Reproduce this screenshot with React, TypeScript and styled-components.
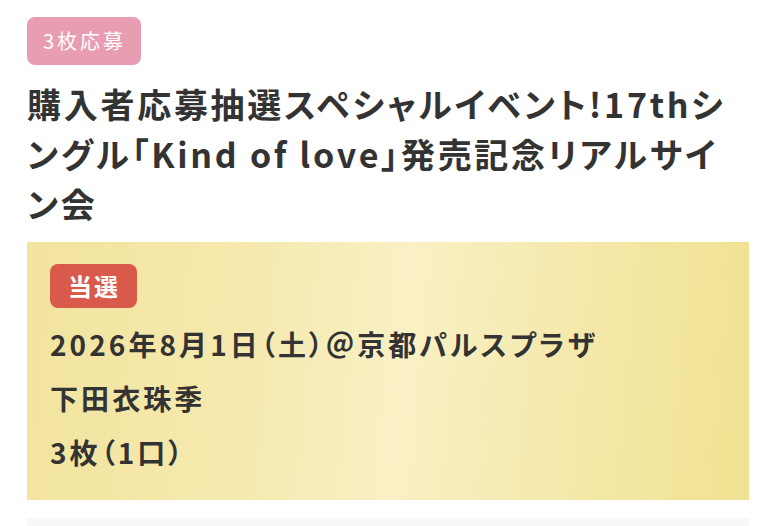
import React from 'react'
import styled, { createGlobalStyle } from 'styled-components'

const GlobalStyle = createGlobalStyle`
    body {
        margin: 0;
        background: #fff;
        font-family: "Noto Sans CJK JP", "Noto Sans", sans-serif;
        font-feature-settings: "palt";
        color: #333;
    }
`

const App = () => {
    return (
        <PageContainer>
            <GlobalStyle />

            <ApplyBadge>3枚応募</ApplyBadge>

            <Title>
                購入者応募抽選スペシャルイベント!17thシングル「Kind of love」発売記念リアルサイン会
            </Title>

            <ResultCard>
                <WinBadge>当選</WinBadge>
                <InfoLine>2026年8月1日（土）＠京都パルスプラザ</InfoLine>
                <InfoLine>下田衣珠季</InfoLine>
                <InfoLine>3枚（1口）</InfoLine>
            </ResultCard>

            <NextCard />
        </PageContainer>
    )
}

export default App

export const PageContainer = styled.div`
    display: flex;
    flex-direction: column;
    align-items: flex-start;
    padding: 17px 28px 0 27px;
    height: 526px;
    box-sizing: border-box;
    overflow: hidden;
`
export const ApplyBadge = styled.span`
    display: inline-block;
    height: 48px;
    line-height: 48px;
    padding: 0 15px 0 16px;
    border-radius: 8px;
    background: #e99db2;
    color: #fff;
    font-size: 20px;
    letter-spacing: 3px;
`
export const Title = styled.h1`
    margin: 14px 0 0;
    font-size: 34px;
    line-height: 50px;
    font-weight: bold;
    letter-spacing: 0.08em;
    color: #333;
`
export const ResultCard = styled.section`
    align-self: stretch;
    display: flex;
    flex-direction: column;
    align-items: flex-start;
    margin-top: 13px;
    padding: 22px 23px 21px;
    background: linear-gradient(95deg, #f2e49e 0%, #f5e9ae 30%, #f9f1c5 52%, #f5e9ae 72%, #f0e290 100%);
`
export const WinBadge = styled.span`
    display: inline-block;
    height: 44px;
    line-height: 44px;
    padding: 0 17px 0 18px;
    margin-bottom: 9px;
    border-radius: 8px;
    background: #d95a4b;
    color: #fff;
    font-size: 24px;
    font-weight: bold;
    letter-spacing: 2px;
`
export const InfoLine = styled.p`
    margin: 0;
    font-size: 28px;
    line-height: 54px;
    font-weight: bold;
    letter-spacing: 0.11em;
    color: #333;
`
export const NextCard = styled.div`
    align-self: stretch;
    margin-top: 18px;
    height: 40px;
    background: #f8f8f8;
`
